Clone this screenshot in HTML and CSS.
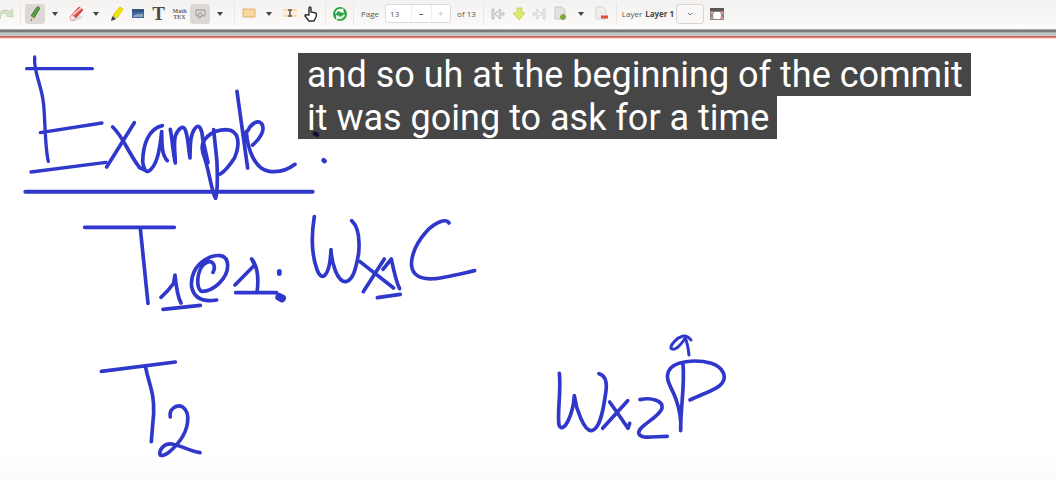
FILE: index.html
```html
<!DOCTYPE html>
<html lang="en">
<head>
<meta charset="utf-8">
<title>Notes</title>
<link rel="stylesheet" href="styles.css">
</head>
<body>
<svg class="defs" aria-hidden="true">
  <symbol id="caret" viewBox="0 0 8 6"><path d="M1 1h6L4 5z" fill="#444"/></symbol>
</svg>
<header class="toolbar">
  <div class="group group-first">
    <button class="tool" aria-label="Redo"><svg viewBox="0 0 20 20"><path d="M2 15Q0 7 8 6q3 0 5 2l2-3 1 8-7-1 2-2q-7-3-8 5z" fill="#d4e3cc" stroke="#c3d5ba"/></svg></button>
  </div>
  <div class="group">
    <button class="tool narrow active" aria-label="Pen"><svg viewBox="0 0 20 20"><path d="M6 12L12 3l3 1-6 10z" fill="#5ba048" stroke="#39802f"/><path d="M12 3l1-1 2 1v1z" fill="#d77b72"/><path d="M6 12l3 2-3 3z" fill="#e9c9a5"/><path d="M6 15l1 1-1 1z" fill="#222"/></svg></button>
    <button class="tool narrow" aria-label="Pen options"><svg class="caret"><use href="#caret"/></svg></button>
    <button class="tool" aria-label="Eraser"><svg viewBox="0 0 20 20"><path d="M6 16l10-3" stroke="#ddd" stroke-width="3"/><path d="M4 13l9-10 4 3-9 10H5z" fill="#d7483f" stroke="#c55"/><path d="M7 11l8-7" stroke="#f8c4bd" stroke-width="2"/><path d="M4 13l2-2 4 3-2 2H5z" fill="#f5e7e5"/></svg></button>
    <button class="tool narrow" aria-label="Eraser options"><svg class="caret"><use href="#caret"/></svg></button>
    <button class="tool" aria-label="Highlighter"><svg viewBox="0 0 20 20"><path d="M6 11l7-8 3 2-6 9z" fill="#f3e400" stroke="#d9cc00"/><path d="M6 12l3 3-2 1-3 1 1-4z" fill="#444"/></svg></button>
    <button class="tool" aria-label="Image"><svg viewBox="0 0 20 20"><path d="M4 5h12v9H4z" fill="#4169a3"/><path d="M4 5h12v3H4z" fill="#365582"/><path d="M5 12q4-3 10-2v3H5z" fill="#8da5c3"/></svg></button>
    <button class="tool type" aria-label="Text">T</button>
    <button class="tool tex" aria-label="Math TEX">Math<br>TEX</button>
    <button class="tool narrow active" aria-label="Shape recognizer"><svg viewBox="0 0 20 20" fill="none" stroke="#999"><path d="M8 12H6V6h9v6h-2"/><circle cx="10" cy="11" r="2"/><path d="M8 15l5-4"/></svg></button>
    <button class="tool narrow" aria-label="Shape options"><svg class="caret"><use href="#caret"/></svg></button>
  </div>
  <div class="group">
    <button class="tool narrow" aria-label="Select rectangle"><svg viewBox="0 0 20 20"><path d="M4 5h12v8H4z" fill="#fbd5a0" stroke="#e2b273"/></svg></button>
    <button class="tool narrow" aria-label="Selection options"><svg class="caret"><use href="#caret"/></svg></button>
    <button class="tool" aria-label="Vertical space"><svg viewBox="0 0 20 20"><path d="M3 5h14v2H3zM3 11h14v2H3z" fill="#fad9a9"/><path d="M3 7h14v4H3z" fill="#fbeedd"/><path d="M10 6v6M8 6h4M8 12h4" fill="none" stroke="#655" stroke-width="1.500"/></svg></button>
    <button class="tool" aria-label="Hand"><svg viewBox="0 0 20 20"><path d="M8 11V4q1-2 2 0v4l5 1q1 1 0 4l-2 4H8l-4-5q0-2 2-1z" fill="#fff" stroke="#333" stroke-width="1.500" stroke-linejoin="round"/></svg></button>
  </div>
  <div class="group tight">
    <button class="tool" aria-label="Refresh"><svg viewBox="0 0 20 20"><circle cx="10" cy="10" r="7" fill="#2ea345"/><path d="M5 9q2-5 7-4l1-1 1 5-5-1 1-1q-3 0-4 3z" fill="#f0faee"/><path d="M15 11q-2 5-7 4l-2 1v-5l4 1-1 1q3 0 5-3z" fill="#d9f3d6"/></svg></button>
  </div>
  <div class="group page-group">
    <label for="page">Page</label>
    <div class="spin"><input id="page" value="13"><button aria-label="Previous page">−</button><button class="off" aria-label="Next page">+</button></div>
    <span>of 13</span>
  </div>
  <div class="group">
    <button class="tool" aria-label="First page"><svg viewBox="0 0 20 20" fill="#eee" stroke="#b5b5b5"><path d="M4 5h2v10H4zM7 10l5-5 1 1-2 3h5v2h-5l2 3-1 1z"/></svg></button>
    <button class="tool narrow" aria-label="Next page down"><svg viewBox="0 0 20 20"><path d="M8 4h5v5h3l-6 7-6-7h4z" fill="#dce874" stroke="#c7d35f"/></svg></button>
    <button class="tool" aria-label="Last page"><svg viewBox="0 0 20 20" fill="#f4f4f4" stroke="#d0d0d0"><path d="M14 5h2v10h-2zM13 10L8 5 7 6l2 3H4v2h5l-2 3 1 1z"/></svg></button>
    <button class="tool" aria-label="Add page"><svg viewBox="0 0 20 20"><path d="M5 3h7l3 3v9H5z" fill="#e2e2e0" stroke="#c8c8c6"/><path d="M13 10v6M10 13h6" stroke="#7fa83c" stroke-width="3"/></svg></button>
    <button class="tool narrow" aria-label="Page options"><svg class="caret"><use href="#caret"/></svg></button>
    <button class="tool" aria-label="Delete page"><svg viewBox="0 0 20 20"><path d="M5 3h7l3 3v9H5z" fill="#eeeeec" stroke="#d4d4d2"/><path d="M10 13h7" stroke="#e84a35" stroke-width="3"/></svg></button>
  </div>
  <div class="group layer-group">
    <label for="layer">Layer</label>
    <div class="layer"><span class="layer-button"><svg viewBox="0 0 8 6"><path d="M2 2l2 2 2-2" fill="none" stroke="#777"/></svg></span><select id="layer"><option>Layer 1</option></select></div>
    <button class="tool narrow" aria-label="Fullscreen"><svg viewBox="0 0 20 20"><path d="M3 4h14v12H3z" fill="#8b8584"/><path d="M3 4h14v3H3z" fill="#5b5757"/><path d="M6 8h8v7H6z" fill="#fff"/><path d="M4 8h3v2H4zM13 8h3v2h-3zM4 13h3v2H4zM13 13h3v2h-3z" fill="#e09b9b"/></svg></button>
  </div>
</header>
<div class="edge"></div>
<main class="page">
  <svg class="ink" viewBox="0 40 1056 439" role="img" aria-label="Handwritten example">
    <g transform="translate(10 45) scale(.3333)" stroke-width="11">
      <path d="M74 36C70 85 95 115 101 180C106 235 105 310 115 349M50 71H247M91 263L276 234M63 381L288 352" stroke-width="10"/>
      <path d="M308 246C340 275 355 325 389 368M373 233L290 366"/>
      <path d="M389 368L412 379M457 242C415 251 399 300 398 350Q403 383 415 379C440 365 449 320 455 260C456 300 455 330 472 347M481 253C488 290 489 325 496 354C496 325 490 300 496 273C503 253 520 237 526 255C535 280 535 310 540 339C541 300 540 270 555 250C570 232 577 260 578 280L594 353"/>
      <path d="M611 254L621 350C622 390 625 430 617 460C605 445 596 365 579 325C565 280 610 255 648 254C690 254 690 300 674 338Q650 375 631 387"/>
      <path d="M681 139L713 369M713 258C722 238 742 222 755 236C768 255 748 284 728 300M709 260C713 315 735 373 778 379Q820 385 855 358"/>
      <path d="M46 440H908" stroke-width="12"/>
      <path d="M915 266l6 3M941 346l3 2" stroke-width="14"/>
    </g>
    <g transform="translate(70 205) scale(.3333)" stroke-width="11">
      <path d="M44 67H313M211 70L234 295M273 277Q295 258 311 235L315 210C318 240 322 275 333 294M279 313L391 301"/>
      <path d="M429 202C440 180 426 160 404 176C382 193 376 245 394 259C430 260 474 220 473 181C473 145 436 145 404 165C375 183 361 215 365 246C373 285 404 291 440 285"/>
      <path d="M495 240L554 180L545 162C565 185 566 230 561 261M497 263H620"/>
      <path d="M628 199v7" stroke-width="14"/><path d="M628 276l8 4" stroke-width="24"/>
      <path d="M733 35C724 90 726 150 740 190C755 237 780 213 783 134C785 175 802 232 828 230C850 225 858 190 866 145C870 100 865 65 845 47"/>
      <path d="M869 169L971 249M943 162L880 260M939 193L964 162C970 190 978 230 989 251M922 278L991 268"/>
      <path d="M1137 54C1128 38 1093 54 1071 78C1030 122 1011 181 1036 207C1065 235 1120 218 1214 197"/>
    </g>
    <g transform="translate(90 350) scale(.3333)" stroke-width="11">
      <path d="M34 64L256 36M166 48C178 110 193 125 191 190Q187 235 184 275"/>
      <path d="M241 201C235 178 261 161 278 171C305 190 293 240 271 270C246 304 222 320 211 316C205 303 220 280 245 282C270 285 296 302 330 308"/>
    </g>
    <g transform="translate(540 320) scale(.3333)" stroke-width="11">
      <path d="M58 160C64 215 51 280 57 315C70 345 99 286 103 227C108 265 132 335 155 332C180 328 190 270 197 220C203 185 194 166 177 161"/>
      <path d="M209 246Q237 285 264 325L269 310M263 242L188 325"/>
      <path d="M300 239C335 231 371 243 366 265C355 295 296 316 296 339C301 359 340 349 382 349"/>
      <path d="M429 130C435 200 421 265 422 332C425 295 420 270 407 235C395 202 375 180 385 155C398 122 469 117 514 130C550 142 560 169 548 187C535 209 484 222 450 240"/>
      <path d="M447 105Q444 75 436 54C415 86 402 92 393 85C391 74 410 53 429 48Q443 46 453 60" stroke-width="9"/>
    </g>
  </svg>
  <p class="caption"><span>and so uh at the beginning of the commit</span><span>it was going to ask for a time</span></p>
</main>
</body>
</html>
```
FILE: styles.css
```css
* { box-sizing: border-box; }
body {
  margin: 0;
  background: #fff;
  font-family: "Open Sans", "Noto Sans", sans-serif;
}
button, input, select { font: inherit; color: inherit; border: 0; padding: 0; background: none; }
.defs { position: absolute; width: 0; height: 0; }

.toolbar {
  display: flex;
  align-items: center;
  height: 29px;
  padding-bottom: 2px;
  background: linear-gradient(#f4f2f1, #faf9f8 80%, #fff);
  color: #555;
  font-size: 8px;
  white-space: nowrap;
  overflow: hidden;
}
.group {
  display: flex;
  align-items: center;
  flex: none;
  height: 22px;
  padding: 0 4px;
  border-left: 1px solid #eae8e6;
}
.group-first { padding: 0; border: 0; width: 20px; }
.tight { padding: 0 3px; }
.tool {
  display: flex;
  align-items: center;
  justify-content: center;
  flex: none;
  width: 21px;
  height: 20px;
}
.group-first .tool { margin-left: -4px; }
.tool svg { width: 20px; height: 20px; }
.tool .caret { width: 8px; height: 6px; }
.narrow { width: 20px; }
.active { background: #dcd8d5; border-radius: 3px; }
.type { font: bold 19px "Liberation Serif", serif; color: #4b4b4b; }
.tex { font: bold 6px/6px "Liberation Serif", serif; color: #666; }

.page-group { padding: 0 7px; gap: 6px; }
.page-group label, .page-group span { flex: none; }
.spin {
  display: flex;
  width: 66px;
  height: 19px;
  border: 1px solid #dedbd8;
  border-radius: 3px;
  background: #fff;
}
.spin input { width: 25px; padding-left: 4px; }
.spin button { width: 20px; border-left: 1px solid #f0efed; font-weight: bold; }
.spin .off { color: #ccc; }

.layer-group { padding: 0 5px; gap: 3px; }
.layer { position: relative; width: 59px; height: 20px; }
.layer select {
  position: relative;
  width: 100%;
  height: 100%;
  appearance: none;
  font-size: 8px;
  font-weight: bold;
  color: #444;
}
.layer-button {
  position: absolute;
  right: 0;
  top: 0;
  display: grid;
  place-items: center;
  width: 28px;
  height: 20px;
  border: 1px solid #d8d5d2;
  border-radius: 3px;
  background: #f8f7f6;
}
.layer-button svg { width: 8px; height: 6px; }

.edge {
  height: 11px;
  background: linear-gradient(#aaa 0 1px, #7b7b7b 1px 3px, #a9abac 3px 4px, #c3c6c7 4px 7px, #b56d66 7px 8px, #f17c6c 8px 9px, #ffd9d2 9px 10px, #fff 10px);
}

.page {
  position: relative;
  background: linear-gradient(#fff 95%, #fafafa);
}
.ink {
  display: block;
  width: 100%;
  height: auto;
  fill: none;
  stroke: #3037cb;
  stroke-linecap: round;
  stroke-linejoin: round;
}
.caption {
  position: absolute;
  left: 298px;
  top: 13px;
  display: flex;
  flex-direction: column;
  align-items: flex-start;
  margin: 0;
  font: 36px/41px Roboto, sans-serif;
  color: #fff;
  white-space: nowrap;
}
.caption span { padding: 2px 8px 0 9px; background: rgba(8, 8, 8, .75); }
```
